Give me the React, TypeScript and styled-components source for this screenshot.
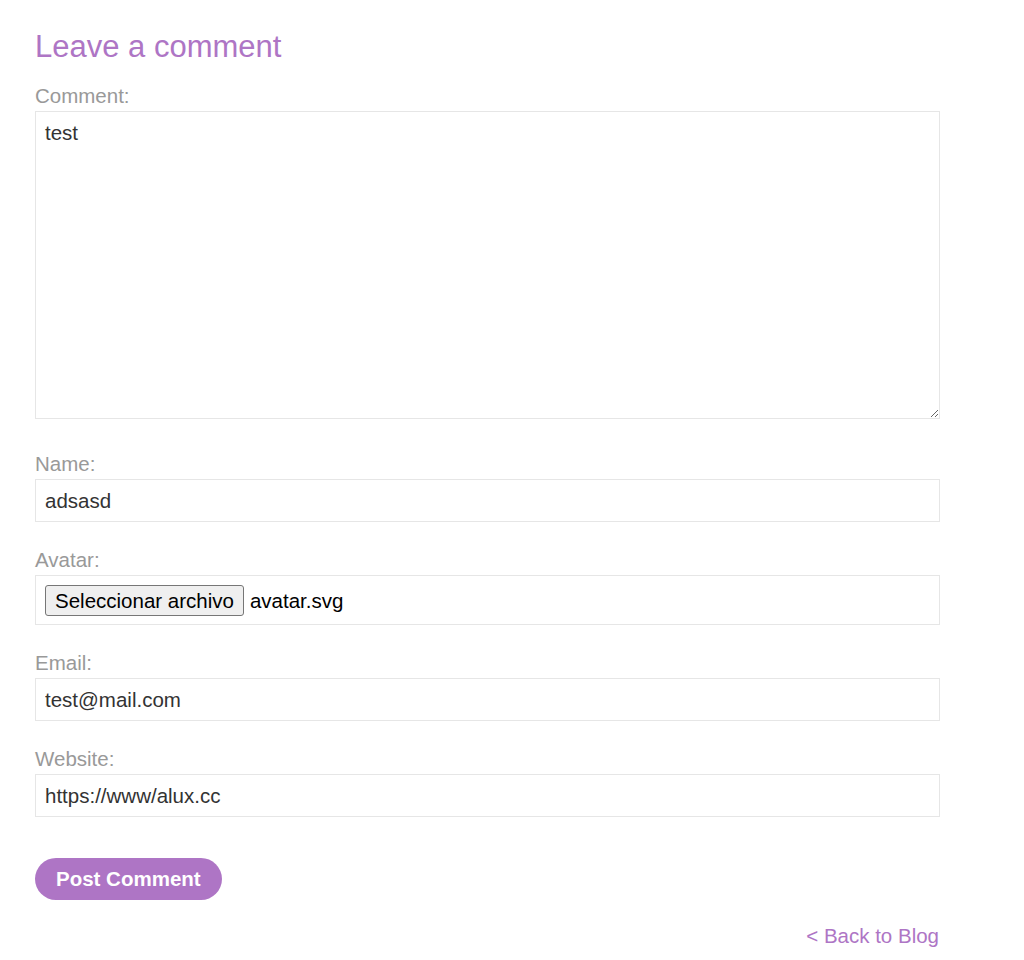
import React from "react";
import styled, { createGlobalStyle } from "styled-components";

const Global = createGlobalStyle`
  html, body { margin: 0; padding: 0; background: #fff; }
  body { font-family: "Liberation Sans", Arial, sans-serif; }
  * { box-sizing: border-box; }
`;

const Page = styled.div`
  width: 905px;
  margin-left: 35px;
  padding-top: 29px;
  padding-bottom: 12px;
`;

const Heading = styled.h2`
  margin: 0 0 19px 0;
  font-size: 31px;
  line-height: 36px;
  font-weight: normal;
  color: #ae75c5;
`;

const Form = styled.form`
  display: flex;
  flex-direction: column;
`;

const Field = styled.div<{ $gap?: number }>`
  display: flex;
  flex-direction: column;
  margin-bottom: ${(p) => (p.$gap ?? 26)}px;
`;

const Label = styled.label`
  display: block;
  font-size: 20.5px;
  line-height: 23px;
  color: #999;
  margin-bottom: 4px;
`;

const boxBase = `
  width: 100%;
  border: 1px solid #e6e6e6;
  background: #fff;
  font-family: "Liberation Sans", Arial, sans-serif;
  font-size: 20.5px;
  color: #333;
  outline: none;
`;

const TextArea = styled.textarea`
  ${boxBase}
  display: block;
  height: 308px;
  padding: 9px 9px;
  line-height: 23px;
  resize: vertical;
  margin: 0;
`;

const TextInput = styled.input`
  ${boxBase}
  display: block;
  height: 43px;
  padding: 0 9px;
  line-height: 23px;
  margin: 0;
`;

const FileBox = styled.div`
  ${boxBase}
  display: flex;
  align-items: center;
  height: 50px;
  padding: 0 9px;
  color: #000;
`;

const FileButton = styled.button`
  font-family: "Liberation Sans", Arial, sans-serif;
  font-size: 20.5px;
  line-height: 23px;
  color: #000;
  background: #efefef;
  border: 1px solid #767676;
  border-radius: 3px;
  padding: 3px 9px;
  margin: 0 6px 0 0;
`;

const FileName = styled.span`
  font-size: 20.5px;
  line-height: 23px;
  color: #000;
`;

const SubmitButton = styled.button`
  align-self: flex-start;
  margin-top: 41px;
  height: 42px;
  padding: 0 21px;
  border: none;
  border-radius: 21px;
  background: #ae75c5;
  color: #fff;
  font-family: "Liberation Sans", Arial, sans-serif;
  font-weight: bold;
  font-size: 20.5px;
`;

const BackRow = styled.div`
  display: flex;
  justify-content: flex-end;
  margin-top: 24px;
  padding-right: 1px;
`;

const BackLink = styled.a`
  font-size: 20.5px;
  line-height: 23px;
  color: #ae75c5;
  text-decoration: none;
`;

export default function App() {
  return (
    <>
      <Global />
      <Page>
        <Heading>Leave a comment</Heading>
        <Form onSubmit={(e) => e.preventDefault()}>
          <Field $gap={33}>
            <Label>Comment:</Label>
            <TextArea defaultValue="test" />
          </Field>
          <Field>
            <Label>Name:</Label>
            <TextInput defaultValue="adsasd" />
          </Field>
          <Field>
            <Label>Avatar:</Label>
            <FileBox>
              <FileButton type="button">Seleccionar archivo</FileButton>
              <FileName>avatar.svg</FileName>
            </FileBox>
          </Field>
          <Field>
            <Label>Email:</Label>
            <TextInput defaultValue="test@mail.com" />
          </Field>
          <Field $gap={0}>
            <Label>Website:</Label>
            <TextInput defaultValue="https://www/alux.cc" />
          </Field>
          <SubmitButton type="submit">Post Comment</SubmitButton>
        </Form>
        <BackRow>
          <BackLink href="#">&lt; Back to Blog</BackLink>
        </BackRow>
      </Page>
    </>
  );
}
